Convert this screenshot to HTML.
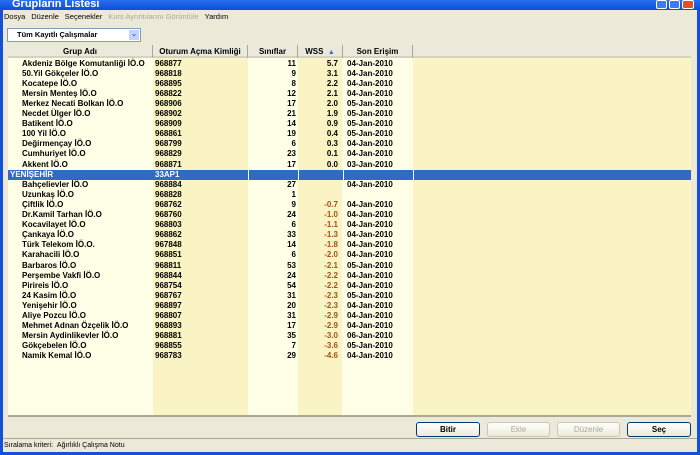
<!DOCTYPE html>
<html><head><meta charset="utf-8"><style>
*{margin:0;padding:0;box-sizing:border-box}
body{width:700px;height:455px;overflow:hidden;background:#ece9d8;font-family:"Liberation Sans",Arial,sans-serif;position:relative}
.abs{position:absolute}
#title{left:0;top:0;width:700px;height:10px;background:linear-gradient(#2a6ff0,#0a4fd8);color:#fff;font-weight:bold;font-size:11px;line-height:9px;padding-left:12px}
#lb{left:0;top:10px;width:3px;height:445px;background:#1450d8}
#rb{right:0;top:10px;width:3px;height:445px;background:#1450d8}
#bb{left:0;top:452px;width:700px;height:3px;background:#1450d8}
#menu{left:4px;top:12px;font-size:7.5px;color:#000}
#menu span{margin-right:6px}
#combo{left:7px;top:28px;width:134px;height:14px;border:1px solid #7f9db9;background:#fff;font-size:7.5px;font-weight:bold;line-height:12px;padding-left:9px}
#combo .btn{position:absolute;right:1px;top:1px;width:10px;height:10px;background:#c1d3fb;color:#4d6185;font-size:7px;line-height:10px;text-align:center}
#grid{left:8px;top:45px;width:683px;height:372px;background:#fffee6;border-bottom:2px solid #aca899;overflow:hidden}
.col{position:absolute;top:0;height:372px;background:#faf4c4}
#hdr{position:absolute;left:0;top:0;width:683px;height:13px;background:#ebe9dc;border-bottom:2px solid #d5d2c0}
.h{position:absolute;top:0;height:13px;font-size:8px;font-weight:bold;text-align:center;line-height:13px;border-right:1px solid #aca899}
.r{position:absolute;left:0;width:683px;height:10.1px;font-size:8px;font-weight:bold;line-height:10px}
.r div{position:absolute;top:0;white-space:nowrap}
.a{left:14px}.b{left:147px}.c{left:240px;width:48px;text-align:right}.d{left:290px;width:40px;text-align:right}.e{left:339px}
.neg{color:#a5501c}
.sel{background:#316ac5;color:#fff}
.sel .a{left:2px}
.bt{top:422px;height:15px;border:1px solid #003c74;border-radius:3px;background:linear-gradient(#fff,#ece9d8);font-size:8px;font-weight:bold;text-align:center;line-height:13px}
.dis{border-color:#c9c7ba;color:#aca899;font-weight:normal}
#status{left:3px;top:438px;width:694px;height:14px;border-top:1px solid #aca899;font-size:7px;line-height:14px;padding-left:1px}
</style></head><body>
<div class="abs" id="title">Grupların Listesi</div>
<div class="abs" style="right:4px;top:0;width:40px;height:10px;"><span style="position:absolute;left:0;top:0;width:11px;height:9px;background:#3d7bf0;border:1px solid #fff;border-radius:2px"></span><span style="position:absolute;left:13px;top:0;width:11px;height:9px;background:#3d7bf0;border:1px solid #fff;border-radius:2px"></span><span style="position:absolute;left:26px;top:0;width:12px;height:9px;background:#e0512a;border:1px solid #fff;border-radius:2px"></span></div>
<div class="abs" id="lb"></div><div class="abs" id="rb"></div><div class="abs" id="bb"></div>
<div class="abs" id="menu"><span>Dosya</span><span>Düzenle</span><span>Seçenekler</span><span style="color:#aca899">Kurs Ayrıntılarını Görüntüle</span><span>Yardım</span></div>
<div class="abs" id="combo">Tüm Kayıtlı Çalışmalar<div class="btn">⌄</div></div>
<div class="abs" id="grid">
<div class="col" style="left:145px;width:95px"></div>
<div class="col" style="left:290px;width:44px"></div>
<div class="col" style="left:405px;width:278px"></div>
<div id="hdr">
<div class="h" style="left:0;width:145px">Grup Adı</div>
<div class="h" style="left:145px;width:95px">Oturum Açma Kimliği</div>
<div class="h" style="left:240px;width:50px">Sınıflar</div>
<div class="h" style="left:290px;width:45px">WSS &nbsp;<span style="color:#3a6fc4;font-size:7px">▲</span></div>
<div class="h" style="left:335px;width:70px">Son Erişim</div>
</div>
<div id="rows" style="position:absolute;left:0;top:13px"></div>
</div>
<div class="abs bt" style="left:416px;width:64px">Bitir</div>
<div class="abs bt dis" style="left:487px;width:63px">Ekle</div>
<div class="abs bt dis" style="left:557px;width:63px">Düzenle</div>
<div class="abs bt" style="left:627px;width:64px">Seç</div>
<div class="abs" id="status">Sıralama kriteri: &nbsp;Ağırlıklı Çalışma Notu</div>
<script>
var d=[["Akdeniz Bölge Komutanliği İÖ.O","968877","11","5.7","04-Jan-2010"],["50.Yil Gökçeler İÖ.O","968818","9","3.1","04-Jan-2010"],["Kocatepe İÖ.O","968895","8","2.2","04-Jan-2010"],["Mersin Menteş İÖ.O","968822","12","2.1","04-Jan-2010"],["Merkez Necati Bolkan İÖ.O","968906","17","2.0","05-Jan-2010"],["Necdet Ülger İÖ.O","968902","21","1.9","05-Jan-2010"],["Batikent İÖ.O","968909","14","0.9","05-Jan-2010"],["100 Yil İÖ.O","968861","19","0.4","05-Jan-2010"],["Değirmençay İÖ.O","968799","6","0.3","04-Jan-2010"],["Cumhuriyet İÖ.O","968829","23","0.1","04-Jan-2010"],["Akkent İÖ.O","968871","17","0.0","03-Jan-2010"],["S"],["Bahçelievler İÖ.O","968884","27","","04-Jan-2010"],["Uzunkaş İÖ.O","968828","1","",""],["Çiftlik İÖ.O","968762","9","-0.7","04-Jan-2010"],["Dr.Kamil Tarhan İÖ.O","968760","24","-1.0","04-Jan-2010"],["Kocavilayet İÖ.O","968803","6","-1.1","04-Jan-2010"],["Çankaya İÖ.O","968862","33","-1.3","04-Jan-2010"],["Türk Telekom İÖ.O.","967848","14","-1.8","04-Jan-2010"],["Karahacili İÖ.O","968851","6","-2.0","04-Jan-2010"],["Barbaros İÖ.O","968811","53","-2.1","05-Jan-2010"],["Perşembe Vakfi İÖ.O","968844","24","-2.2","04-Jan-2010"],["Pirireis İÖ.O","968754","54","-2.2","04-Jan-2010"],["24 Kasim İÖ.O","968767","31","-2.3","05-Jan-2010"],["Yenişehir İÖ.O","968897","20","-2.3","04-Jan-2010"],["Aliye Pozcu İÖ.O","968807","31","-2.9","04-Jan-2010"],["Mehmet Adnan Özçelik İÖ.O","968893","17","-2.9","04-Jan-2010"],["Mersin Aydinlikevler İÖ.O","968881","35","-3.0","06-Jan-2010"],["Gökçebelen İÖ.O","968855","7","-3.6","05-Jan-2010"],["Namik Kemal İÖ.O","968783","29","-4.6","04-Jan-2010"]];
var h="";d.forEach(function(r,i){var t=(i*10.1+0.5).toFixed(1);
if(r[0]=="S"){h+='<div class="r sel" style="top:'+t+'px"><div class="a">YENİŞEHİR</div><div class="b">33AP1</div><div style="left:240px;width:1px;height:10px;background:#fff"></div><div style="left:290px;width:1px;height:10px;background:#fff"></div><div style="left:335px;width:1px;height:10px;background:#fff"></div><div style="left:405px;width:1px;height:10px;background:#fff"></div></div>';return;}
h+='<div class="r" style="top:'+t+'px"><div class="a">'+r[0]+'</div><div class="b">'+r[1]+'</div><div class="c">'+r[2]+'</div><div class="d'+(r[3].charAt(0)=="-"?" neg":"")+'">'+r[3]+'</div><div class="e">'+r[4]+'</div></div>';});
document.getElementById("rows").innerHTML=h;
</script>
</body></html>
